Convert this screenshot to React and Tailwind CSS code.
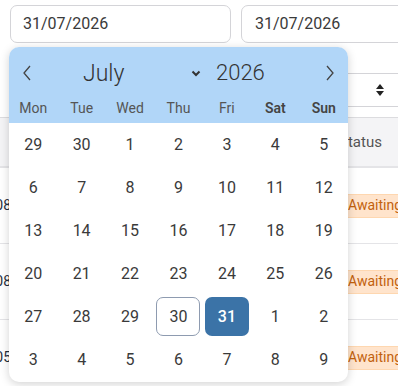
import React from "react";

const weeks = [
  [29, 30, 1, 2, 3, 4, 5],
  [6, 7, 8, 9, 10, 11, 12],
  [13, 14, 15, 16, 17, 18, 19],
  [20, 21, 22, 23, 24, 25, 26],
  [27, 28, 29, 30, 31, 1, 2],
  [3, 4, 5, 6, 7, 8, 9],
];
const days = ["Mon", "Tue", "Wed", "Thu", "Fri", "Sat", "Sun"];
const rows = ["2026-07-08", "2026-07-08", "2026-07-05"];

function Chevron({ dir }) {
  return (
    <svg width="10" height="16" viewBox="0 0 10 16" fill="none">
      {dir === "left" ? (
        <path d="M8 1 L2 8 L8 15" stroke="#444" strokeWidth="1.3" />
      ) : (
        <path d="M2 1 L8 8 L2 15" stroke="#444" strokeWidth="1.3" />
      )}
    </svg>
  );
}

export default function App() {
  return (
    <div
      className="relative w-[398px] h-[386px] overflow-hidden bg-white text-[#333]"
      style={{ fontFamily: "Roboto, 'Noto Sans', sans-serif" }}
    >
      {/* filter row */}
      <div className="flex gap-[10px] pl-[10px] pt-[5px]">
        <div className="w-[221px] h-[38px] shrink-0 border border-[#d4d4d8] rounded-[7px] flex items-center pl-[12px] text-[16px] text-[#3a3a3a]">
          31/07/2026
        </div>
        <div className="w-[200px] h-[38px] shrink-0 border border-[#d4d4d8] rounded-[7px] flex items-center pl-[13px] text-[16px] text-[#3a3a3a]">
          31/07/2026
        </div>
      </div>
      {/* select row */}
      <div className="flex pl-[240px] pt-[30px]">
        <div className="w-[200px] h-[34px] shrink-0 border border-[#d4d4d8] rounded-[8px] flex items-center pl-[134px]">
          <svg width="10" height="14" viewBox="0 0 10 14">
            <path d="M5 1 L9 6 L1 6 Z" fill="#222" />
            <path d="M5 13 L9 8 L1 8 Z" fill="#222" />
          </svg>
        </div>
      </div>
      {/* table */}
      <div className="mt-[10px] border-t border-[#dcdcdf]">
        <div className="h-[50px] bg-[#f4f4f6] border-b-2 border-[#e4e4e7] flex items-center pl-[339px] text-[15px] text-[#555]">
          Status
        </div>
        {rows.map((r, i) => (
          <div
            key={i}
            className="h-[76px] border-b border-[#e4e4e7] flex items-center"
          >
            <div className="w-[11px] overflow-hidden flex justify-end whitespace-nowrap text-[14px] text-[#1f2d3d] shrink-0">
              {r}
            </div>
            <div className="ml-[334px] h-[24px] px-[2px] bg-[#ffe4cc] border border-[#fed7b0] flex items-center text-[14px] text-[#c2610c] whitespace-nowrap rounded-[3px]">
              Awaiting Confirmation
            </div>
          </div>
        ))}
      </div>

      {/* datepicker popup */}
      <div className="absolute left-[9px] top-[47px] w-[339px] h-[335px] rounded-[10px] overflow-hidden bg-white shadow-[0_2px_10px_rgba(0,0,0,0.18)]">
        <div className="h-[76px] bg-[#b1d6f8]">
          <div className="h-[50px] flex items-center pt-[2px]">
            <div className="w-[36px] flex justify-center">
              <Chevron dir="left" />
            </div>
            <div className="w-[161px] flex items-center">
              <span className="pl-[38px] text-[23px] font-light text-[#333] leading-none">
                July
              </span>
              <span className="flex-1" />
              <svg width="10" height="7" viewBox="0 0 10 7" className="mr-[5px]">
                <path d="M1.5 1.5 L5 5 L8.5 1.5" stroke="#333" strokeWidth="2" fill="none" />
              </svg>
            </div>
            <span className="ml-[10px] text-[22px] font-light text-[#333] leading-none">
              2026
            </span>
            <span className="flex-1" />
            <div className="w-[36px] flex justify-center">
              <Chevron dir="right" />
            </div>
          </div>
          <div className="h-[22px] grid grid-cols-7">
            {days.map((d, i) => (
              <div
                key={d}
                className={
                  "flex items-center justify-center text-[14px] " +
                  (i >= 5 ? "font-semibold text-[#444]" : "text-[#555]")
                }
              >
                {d}
              </div>
            ))}
          </div>
        </div>
        <div className="grid grid-cols-7">
          {weeks.map((w, wi) =>
            w.map((d, di) => {
              const today = wi === 4 && di === 3;
              const sel = wi === 4 && di === 4;
              return (
                <div key={wi + "-" + di} className="h-[43px] flex items-center justify-center">
                  <div
                    className={
                      "w-[44px] h-[39px] rounded-[7px] flex items-center justify-center text-[16px] " +
                      (sel
                        ? "bg-[#3b73a7] text-white font-medium"
                        : today
                        ? "border border-[#8e9bb0] text-[#3a3a3a]"
                        : "text-[#3a3a3a]")
                    }
                  >
                    {d}
                  </div>
                </div>
              );
            })
          )}
        </div>
      </div>
    </div>
  );
}
